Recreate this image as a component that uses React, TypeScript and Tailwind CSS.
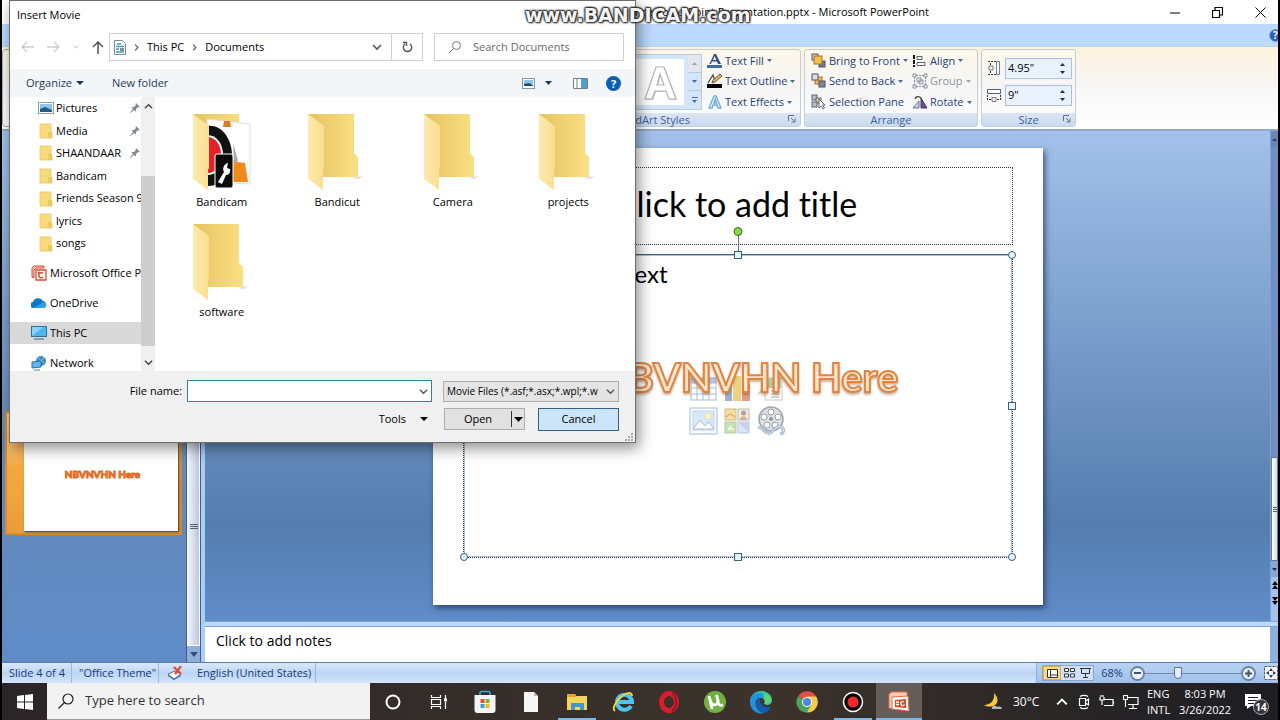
import type { ReactNode } from 'react';

const ui = 'font-["Open_Sans","Noto_Sans",sans-serif]';

function Caret({ className = 'text-[#4a6a9a]' }: { className?: string }) {
  return (
    <svg className={`shrink-0 ${className}`} width="5" height="3" viewBox="0 0 5 3">
      <path d="M0 0h5L2.5 3z" fill="currentColor" />
    </svg>
  );
}

function Chevron({ size = 9, className = 'text-[#555]', d = 'M1 3l4 4 4-4' }: { size?: number; className?: string; d?: string }) {
  return (
    <svg className={`shrink-0 ${className}`} width={size} height={size} viewBox="0 0 10 10" fill="none" stroke="currentColor" strokeWidth="1.6">
      <path d={d} />
    </svg>
  );
}

/* ---------- Ribbon ---------- */

function Launcher() {
  return (
    <svg width="8" height="8" viewBox="0 0 8 8" fill="none" stroke="#5b7390">
      <path d="M.5 6V.5H6M3 3l3.500 3.500M7 3.500V7H3.500" />
    </svg>
  );
}

function LetterIcon({ fill, bar }: { fill: string; bar?: string }) {
  return (
    <svg width="16" height="16" viewBox="0 0 16 16">
      <path d="M2 11h2l1-2.500h5l1 2.500h3L9 1H7L3 10zM6 7l1.700-4L9.300 7z" fill={fill} />
      {bar && <rect x="0" y="12" width="15" height="3" fill={bar} />}
    </svg>
  );
}

const outlineIcon = (
  <svg width="16" height="16" viewBox="0 0 16 16">
    <path d="M1 10L6 2l2 6" fill="none" stroke="#444" strokeWidth="1.200" />
    <path d="M5 10l1-3 7-6 2 2-7 6z" fill="#d9ad6c" stroke="#5e3b1c" strokeWidth=".8" />
    <rect x="0" y="11" width="15" height="4" fill="#000" />
  </svg>
);

const effectsIcon = (
  <svg width="16" height="16" viewBox="0 0 16 16">
    <path d="M2 14L7 2h2l5 12h-3l-1-3H6l-1 3zM7 9h2.500L8.200 5z" fill="#e8f5ff" stroke="#6fb0e0" strokeWidth="1.400" />
  </svg>
);

const frontIcon = (
  <svg width="16" height="16" viewBox="0 0 16 16" stroke="#4c5666">
    <rect x="1" y="1" width="6" height="6" fill="#cfd6df" />
    <rect x="8" y="8" width="6" height="6" fill="#6f7b8c" />
    <rect x="3" y="3" width="8" height="8" fill="#f5bd4b" stroke="#a8752a" />
  </svg>
);

const backIcon = (
  <svg width="16" height="16" viewBox="0 0 16 16" stroke="#4c5666">
    <rect x="4" y="4" width="7" height="7" fill="#f5bd4b" stroke="#a8752a" />
    <rect x="1" y="1" width="6" height="6" fill="#dbe0e7" />
    <rect x="8" y="8" width="6" height="6" fill="#7b8796" />
  </svg>
);

const paneIcon = (
  <svg width="16" height="16" viewBox="0 0 16 16" stroke="#5c6675">
    <rect x="1" y="1" width="5" height="5" fill="#b5bdc8" />
    <rect x="5" y="4" width="5" height="5" fill="#f2cf7a" />
    <rect x="1" y="8" width="5" height="5" fill="#b5bdc8" />
    <path d="M8 5v9l2-2 2 3 1.500-1-2-3h2.500z" fill="#fff" />
  </svg>
);

const alignIcon = (
  <svg width="16" height="16" viewBox="0 0 16 16" fill="none">
    <path d="M2 2v12" stroke="#111" strokeWidth="2" strokeDasharray="4 1" />
    <path d="M5 3.500h5v3H5zM5 9.500h8v3H5z" stroke="#555f6e" fill="#fff" />
  </svg>
);

const groupIcon = (
  <svg width="16" height="16" viewBox="0 0 16 16" fill="none" stroke="#8a93a0">
    <path d="M4 2.500h8M4 13.500h8M2.500 4v8M13.500 4v8" strokeDasharray="2 1" />
    <path d="M1 1h3v3H1zM12 1h3v3h-3zM1 12h3v3H1zM12 12h3v3h-3zM5 5h4v4H5zM7 7h4v4H7z" />
  </svg>
);

const rotateIcon = (
  <svg width="16" height="16" viewBox="0 0 16 16">
    <path d="M7 7v7H1z" fill="#cdd3dc" stroke="#6b7584" />
    <path d="M9 4v10h6z" fill="#6a4b98" stroke="#48307a" />
    <path d="M3 5c1-3 4-3 6-1" fill="none" stroke="#333" strokeWidth="1.300" />
  </svg>
);

interface RibbonCommand {
  label: string;
  icon: ReactNode;
  menu?: boolean;
  disabled?: boolean;
}

const textCommands: RibbonCommand[] = [
  { label: 'Text Fill', icon: <LetterIcon fill="#2c4f86" bar="#3d6cab" />, menu: true },
  { label: 'Text Outline', icon: outlineIcon, menu: true },
  { label: 'Text Effects', icon: effectsIcon, menu: true },
];

const orderCommands: RibbonCommand[] = [
  { label: 'Bring to Front', icon: frontIcon, menu: true },
  { label: 'Send to Back', icon: backIcon, menu: true },
  { label: 'Selection Pane', icon: paneIcon },
];

const alignCommands: RibbonCommand[] = [
  { label: 'Align', icon: alignIcon, menu: true },
  { label: 'Group', icon: groupIcon, menu: true, disabled: true },
  { label: 'Rotate', icon: rotateIcon, menu: true },
];

function CommandColumn({ commands }: { commands: RibbonCommand[] }) {
  return (
    <div className="grid h-[62px] grid-rows-3">
      {commands.map(({ label, icon, menu, disabled }) => (
        <button
          key={label}
          disabled={disabled}
          className="flex items-center gap-[2px] whitespace-nowrap text-[#1f3f77] disabled:text-[#8f949c]"
        >
          {icon}
          <span>{label}</span>
          {menu && <Caret className={disabled ? 'ml-px text-[#a0a5ad]' : 'ml-px text-[#4a6a9a]'} />}
        </button>
      ))}
    </div>
  );
}

function RibbonGroup({ title, className, launcher, children }: { title: string; className: string; launcher?: boolean; children: ReactNode }) {
  return (
    <section className={`flex shrink-0 flex-col rounded-[3px] border border-[#c4cdd8] bg-gradient-to-b from-[#fdf8ea] via-[#f5f5f6] to-white ${className}`}>
      <div className="flex min-h-0 flex-1 items-center">{children}</div>
      <div className="relative flex h-[13px] items-center justify-center bg-gradient-to-b from-[#dce6f4] to-[#c9daef] text-[#3e5f9b]">
        {title}
        {launcher && (
          <button aria-label={`${title} options`} className="absolute right-1 top-[2px]">
            <Launcher />
          </button>
        )}
      </div>
    </section>
  );
}

function SizeField({ label, value, icon }: { label: string; value: string; icon: ReactNode }) {
  return (
    <label className="flex items-center gap-1" aria-label={label}>
      {icon}
      <span className="flex h-[21px] w-[67px] items-center border border-[#a9c1de] bg-[#e9f2fc] pr-[6px]">
        <input type="text" defaultValue={value} className="w-0 flex-1 bg-transparent pl-[2px] text-black outline-none" />
        <span className="flex flex-col gap-[5px] text-[#1d2a55]">
          <svg width="5" height="3" viewBox="0 0 5 3"><path d="M0 3h5L2.500 0z" fill="currentColor" /></svg>
          <Caret className="text-[#1d2a55]" />
        </span>
      </span>
    </label>
  );
}

const heightIcon = (
  <svg width="14" height="16" viewBox="0 0 14 16" fill="none" stroke="#333">
    <path d="M1 1.500h8M1 14.500h8M3.500 3v2M3.500 11v2" strokeDasharray="2 1" />
    <path d="M2 6h4v4H2z" stroke="#777" />
    <path d="M9.500 1.500h3v13h-3z" stroke="#6a7fa5" fill="#fff" />
  </svg>
);

const widthIcon = (
  <svg width="14" height="16" viewBox="0 0 14 16" fill="none" stroke="#333">
    <path d="M.5 2.500h13v4H.500z" stroke="#555f70" fill="#fff" />
    <path d="M.5 8v5M13.500 8v5M2 12.500h2M10 12.500h2" strokeDasharray="2 1" />
    <path d="M5 10.500h4v4H5z" stroke="#777" />
  </svg>
);

function Ribbon() {
  return (
    <div className="flex h-[85px] shrink-0 justify-start gap-[3px] border-b-2 border-[#8fa8c8] border-t border-t-[#c3cfdc] bg-gradient-to-b from-[#fdf3dc] via-[#f7f7f7] to-white pb-[2px] pt-[2px] text-[11px] leading-4">
      <div className="w-[498px] shrink-0 rounded border border-[#9fa9b5]" />
      <RibbonGroup title="WordArt Styles" launcher className="w-[298px]">
        <div className="ml-auto flex h-[56px] border border-[#b7cbe4] bg-[#d3e5f8]">
          <div className="my-1 mr-1 flex w-[48px] items-center justify-center bg-white">
            <svg width="36" height="42" viewBox="0 0 36 42">
              <path d="M3 38L14 6h8l12 32h-7l-3-8H13l-3 8zM15 24h7l-4-11z" fill="#c4c4c4" transform="translate(1 1)" />
              <path d="M3 38L14 6h8l12 32h-7l-3-8H13l-3 8zM15 24h7l-4-11z" fill="#fff" stroke="#b5b5b5" strokeWidth="1.200" />
            </svg>
          </div>
          <div className="grid w-[13px] grid-rows-3 divide-y divide-[#b7cbe4]">
            <button aria-label="Previous styles" className="grid place-items-center bg-[#e3e7ec]">
              <svg width="5" height="3" viewBox="0 0 5 3"><path d="M0 3h5L2.500 0z" fill="#9aa4b0" /></svg>
            </button>
            <button aria-label="Next styles" className="grid place-items-center"><Caret /></button>
            <button aria-label="More styles" className="flex flex-col items-center justify-center gap-[2px]">
              <span className="h-px w-[6px] bg-[#4a6a9a]" />
              <Caret />
            </button>
          </div>
        </div>
        <div className="w-[98px] pl-[5px]"><CommandColumn commands={textCommands} /></div>
      </RibbonGroup>
      <RibbonGroup title="Arrange" className="w-[174px]">
        <div className="flex gap-1 pl-[6px]">
          <div className="w-[97px]"><CommandColumn commands={orderCommands} /></div>
          <CommandColumn commands={alignCommands} />
        </div>
      </RibbonGroup>
      <RibbonGroup title="Size" launcher className="w-[95px]">
        <div className="flex flex-col gap-[6px] pl-[5px]">
          <SizeField label="Shape height" value={'4.95"'} icon={heightIcon} />
          <SizeField label="Shape width" value={'9"'} icon={widthIcon} />
        </div>
      </RibbonGroup>
    </div>
  );
}

/* ---------- Slide ---------- */

const handles = [
  'left-0 top-0 rounded-full',
  'left-1/2 top-0',
  'left-full top-0 rounded-full',
  'left-0 top-1/2',
  'left-full top-1/2',
  'left-0 top-full rounded-full',
  'left-1/2 top-full',
  'left-full top-full rounded-full',
];

function ContentIcons() {
  return (
    <svg width="98" height="66" viewBox="0 0 98 66" opacity=".6">
      <g stroke="#6f8fbd" fill="#fff">
        <rect x="2" y="8" width="25" height="22" />
        <rect x="2" y="8" width="25" height="5" fill="#7ea1d6" />
        <path d="M2 18h25M2 24h25M8 13v17M14 13v17M20 13v17" />
      </g>
      <path d="M36 16h7v15h-7z" fill="#5a7fb8" />
      <path d="M44 6h8v25h-8z" fill="#e4b52e" />
      <path d="M53 14h8v17h-8z" fill="#cf5a3c" />
      <path d="M76 8h17v22H76z" fill="#fff" stroke="#9aa" />
      <path d="M68 25L80 8h12v10H80z" fill="#7fb870" />
      <path d="M82 21h8M82 24h8M82 27h8" stroke="#666" />
      <g>
        <rect x="1" y="38" width="27" height="26" fill="#f5faff" stroke="#6f93a8" />
        <rect x="4" y="41" width="21" height="19" fill="#b9dcf8" stroke="#9bbbd6" />
        <circle cx="19" cy="46" r="3" fill="#fff0b0" stroke="#e9c46a" />
        <path d="M4 59l7-9 5 6 4-4 5 7z" fill="#fff" stroke="#6d93c4" />
      </g>
      <g strokeWidth="1">
        <rect x="36" y="39" width="11" height="11" fill="#f3c957" stroke="#b08c50" />
        <path d="M37 47l4-3 5 3" stroke="#a35a35" fill="none" />
        <rect x="49" y="39" width="11" height="11" fill="#e8ddd3" stroke="#8d8d8d" />
        <circle cx="54.500" cy="43" r="2.500" fill="#8e6046" />
        <path d="M51 50c0-5 7-5 7 0z" fill="#c98044" />
        <rect x="36" y="52" width="11" height="11" fill="#a5d086" stroke="#79a566" />
        <path d="M38 60l3-5 4 5z" fill="#e3f4d8" />
        <rect x="49" y="52" width="11" height="11" fill="#c5d6f5" stroke="#8a9fce" />
        <path d="M49 52l11 11V52z" fill="#a5b7ee" />
      </g>
      <g stroke="#59656f">
        <circle cx="82" cy="49" r="12" fill="#c5cbd1" strokeWidth="1.500" />
        <g fill="#fff">
          <circle cx="82" cy="42" r="3" /><circle cx="75" cy="47" r="3" /><circle cx="89" cy="47" r="3" />
          <circle cx="78" cy="55" r="3" /><circle cx="86" cy="55" r="3" />
        </g>
        <circle cx="82" cy="49" r="1.500" fill="#444" />
        <path d="M69 58c5-3 7 8 12 5s7-8 11-6c4 2 3 6-1 7" fill="none" stroke="#5f86ab" strokeWidth="3" />
        <path d="M69 58c5-3 7 8 12 5s7-8 11-6c4 2 3 6-1 7" fill="none" stroke="#d6e5f2" />
      </g>
    </svg>
  );
}

function Slide() {
  return (
    <div className="relative flex h-[457px] w-[610px] shrink-0 flex-col gap-[9px] bg-white px-[30px] pt-[19px] font-[Lato,Carlito,sans-serif] text-black shadow-[2px_3px_6px_rgba(20,40,80,0.7)] [font-variant-ligatures:none]">
      <div className="flex h-[78px] items-center justify-center border border-dotted border-[#333] pb-1 pr-1 text-[34px]">
        Click to add title
      </div>
      <div className="relative h-[304px] border border-dotted border-[#1f3347] shadow-[inset_0_0_0_1px_#a9c2d6] [border-top-style:solid] [border-top-color:#44647f]">
        <ul className="list-disc pl-[32px] pt-[4px] text-[24px] leading-[30px]"><li>Click to add text</li></ul>
        <div className="absolute inset-x-0 top-[115px] flex justify-center"><ContentIcons /></div>
        <span className="absolute -top-[20px] left-1/2 h-[20px] w-px bg-[#5a7186]" />
        <span className="absolute -top-[28px] left-1/2 size-[9px] -translate-x-1/2 rounded-full border border-[#3f6b22] bg-[#86d83c]" />
        {handles.map((place) => (
          <span key={place} className={`absolute size-2 -translate-x-1/2 -translate-y-1/2 border border-[#3d6076] bg-[#e2f3fa] ${place}`} />
        ))}
      </div>
      <div className="absolute inset-x-0 top-[204px] whitespace-nowrap pl-5 text-center text-[40px] font-bold leading-[50px] text-[#fee6cd] drop-shadow-[0_2px_1px_rgba(120,60,20,0.4)] [-webkit-text-stroke:2px_#e2833f]">
        NBVNVHN Here
      </div>
    </div>
  );
}

function SlidePane() {
  return (
    <aside className="flex w-[199px] shrink-0">
      <div className="flex flex-1 flex-col justify-end bg-gradient-to-b from-[#a3c1ea] via-[#6488b8] via-60% to-[#5f8cc8] pb-[127px] pl-[3px] pr-1">
        <div className="flex h-[124px] justify-end border-2 border-[#d58a35] bg-gradient-to-b from-[#f6d29a] via-[#f3a93f] via-45% to-[#eb9d38] pb-[2px] pr-[2px] pt-1">
          <div className="flex w-[154px] items-center justify-center bg-white pl-[3px] font-[Lato,Carlito,sans-serif] text-[10px] font-bold text-[#f9a86a] shadow-[1px_1px_2px_#333] [-webkit-text-stroke:1px_#e5661c]">
            NBVNVHN Here
          </div>
        </div>
      </div>
      <div className="flex w-[15px] flex-col border-x border-[#3f5f8f] bg-[#7c9cc6]">
        <div className="grid flex-1 place-items-center border border-white bg-gradient-to-r from-[#f0f3fa] to-[#bcc6dc]">
          <span className="mt-[276px] flex flex-col gap-px">
            <span className="h-px w-2 bg-[#555f78]" /><span className="h-px w-2 bg-[#555f78]" /><span className="h-px w-2 bg-[#555f78]" />
          </span>
        </div>
        <button aria-label="Scroll slides down" className="grid h-4 place-items-center bg-[#8fafd8]">
          <svg width="8" height="5" viewBox="0 0 8 5"><path d="M0 0h8L4 5z" fill="#334f80" /></svg>
        </button>
      </div>
    </aside>
  );
}

function EdgeScrollbar() {
  return (
    <div className="flex w-2 shrink-0 flex-col overflow-hidden border-l border-[#7fa0d0] bg-[#7090c4]">
      <button aria-label="Scroll up" className="grid h-4 place-items-center bg-[#6786b8]"><Caret className="rotate-180 text-[#2d456e]" /></button>
      <div className="flex-1" />
      <div className="grid h-[104px] place-items-center border border-[#5f7aa6] bg-gradient-to-r from-white to-[#d5dcea]">
        <span className="flex flex-col gap-px">
          <span className="h-px w-1 bg-[#555f78]" /><span className="h-px w-1 bg-[#555f78]" /><span className="h-px w-1 bg-[#555f78]" />
        </span>
      </div>
      <button aria-label="Scroll down" className="grid h-4 place-items-center bg-[#86a6d4]"><Caret className="text-[#1f3358]" /></button>
      <div className="flex h-[44px] flex-col items-center justify-start gap-2 bg-[#a4c2ee] pt-1">
        <button aria-label="Previous slide">
          <svg width="6" height="8" viewBox="0 0 6 8"><path d="M0 4l3-4 3 4zM0 8l3-4 3 4z" /></svg>
        </button>
        <button aria-label="Next slide">
          <svg width="6" height="8" viewBox="0 0 6 8"><path d="M0 0h6L3 4zM0 4h6L3 8z" /></svg>
        </button>
      </div>
    </div>
  );
}

function Workspace() {
  return (
    <div className="flex min-h-0 flex-1 bg-[#a9ccf8]">
      <SlidePane />
      <div className="ml-1 flex min-w-0 flex-1 flex-col">
        <div className="flex min-h-0 flex-1">
          <div className="flex min-w-0 flex-1 items-center justify-center bg-gradient-to-b from-[#a3c1ea] via-[#557dae] via-80% to-[#618cc8]">
            <Slide />
          </div>
          <EdgeScrollbar />
        </div>
        <div className="h-[6px] shrink-0 border-y border-[#7fa3d6] bg-[#bcd8fb]" />
        <div className="flex h-[35px] shrink-0 bg-white">
          <textarea aria-label="Notes" placeholder="Click to add notes" className="flex-1 resize-none pl-[11px] pt-1 text-[14px] leading-5 outline-none placeholder:text-black" />
          <div className="w-2 bg-[#8fb0dc]" />
        </div>
      </div>
    </div>
  );
}

/* ---------- Status bar ---------- */

function StatusBar() {
  return (
    <footer className="flex h-[21px] shrink-0 items-center border-t border-[#5d7ba6] bg-gradient-to-b from-[#dbe9fb] via-[#bcd5f5] to-[#d3e5fb] text-[11px] text-[#1b3a75]">
      <span className="flex h-full w-[70px] items-center border-r border-[#9db9de] pl-[7px]">Slide 4 of 4</span>
      <span className="flex h-full w-[87px] items-center border-r border-[#9db9de] pl-[7px]">"Office Theme"</span>
      <button aria-label="Spelling" className="ml-2">
        <svg width="16" height="14" viewBox="0 0 16 14">
          <path d="M1 8l7-3 6 3-7 5z" fill="#fff" stroke="#5470a0" />
          <path d="M1 9l6 4 7-4v1l-7 4-6-4z" fill="#3b5c9a" />
          <path d="M7 1l7 7M14 0L8 8" stroke="#e04a33" strokeWidth="2.200" />
        </svg>
      </button>
      <span className="flex h-full w-[133px] items-center border-r border-[#9db9de] pl-[14px]">English (United States)</span>
      <div className="ml-auto flex h-full items-center border-l border-[#8fb0dc] bg-gradient-to-b from-[#b9d2f2] to-[#9fc0ea] pl-[5px]">
        <div className="flex h-4 w-[52px] items-center border border-[#86a5cf] bg-[#cfe0f7]">
          <button aria-label="Normal view" className="grid h-full flex-1 place-items-center border border-[#e2a64b] bg-[#fcd98f]">
            <svg width="11" height="9" viewBox="0 0 11 9" fill="#fff" stroke="#333"><path d="M.5.500h10v8H.500zM3.500.500v8M3.500 6h7" /></svg>
          </button>
          <button aria-label="Slide sorter" className="grid h-full flex-1 place-items-center">
            <svg width="11" height="10" viewBox="0 0 11 10" fill="#fff" stroke="#333"><path d="M.5.500h4v3h-4zM6.500.500h4v3h-4zM.5 6h4v3h-4zM6.500 6h4v3h-4z" /></svg>
          </button>
          <button aria-label="Slide show" className="grid h-full flex-1 place-items-center">
            <svg width="11" height="10" viewBox="0 0 11 10" fill="none" stroke="#333"><path d="M0 .500h11M1.500 1v4.500h8V1M5.500 6v3M3 9.500h5" /></svg>
          </button>
        </div>
        <button className="w-[36px] text-center">68%</button>
        <button aria-label="Zoom out" className="grid size-[15px] place-items-center rounded-full border-2 border-[#6b83a8] bg-[#eef3fa]">
          <span className="h-[2px] w-[7px] bg-[#41536f]" />
        </button>
        <input
          type="range"
          aria-label="Zoom"
          min={0}
          max={100}
          defaultValue={33}
          className="h-3 w-[96px] appearance-none bg-[linear-gradient(#7189ad,#7189ad)] bg-[length:100%_1px] bg-center bg-no-repeat [&::-webkit-slider-thumb]:h-3 [&::-webkit-slider-thumb]:w-2 [&::-webkit-slider-thumb]:appearance-none [&::-webkit-slider-thumb]:rounded-b-full [&::-webkit-slider-thumb]:border [&::-webkit-slider-thumb]:border-[#5f7597] [&::-webkit-slider-thumb]:bg-[#e6edf8]"
        />
        <button aria-label="Zoom in" className="grid size-[15px] place-items-center rounded-full border-2 border-[#6b83a8] bg-[#eef3fa]">
          <svg width="9" height="9" viewBox="0 0 9 9" stroke="#41536f" strokeWidth="2"><path d="M4.500 1v7M1 4.500h7" /></svg>
        </button>
        <button aria-label="Fit slide to window" className="ml-2">
          <svg width="14" height="14" viewBox="0 0 14 14">
            <rect x=".5" y=".5" width="13" height="13" fill="#f4f7fc" stroke="#55637a" strokeDasharray="3 1" />
            <path d="M7 2l2 3H5zM7 12l2-3H5zM2 7l3-2v4zM12 7L9 5v4z" fill="#333f55" />
          </svg>
        </button>
      </div>
    </footer>
  );
}

/* ---------- Taskbar ---------- */

const apps: { name: string; icon: ReactNode; open?: boolean; active?: boolean }[] = [
  {
    name: 'Cortana',
    icon: <svg width="16" height="16" viewBox="0 0 16 16"><circle cx="8" cy="8" r="6.500" fill="none" stroke="#fff" strokeWidth="2" /></svg>,
  },
  {
    name: 'Task View',
    icon: (
      <svg width="18" height="16" viewBox="0 0 18 16" fill="none" stroke="#fff">
        <path d="M1.500 1v2.500h9V1M1.500 15v-2.500h9V15M1.500 5.500h9v5h-9zM15.500 1v4M15.500 8v7" strokeWidth="1.200" />
        <rect x="14.500" y="5" width="2" height="2" fill="#fff" />
      </svg>
    ),
  },
  {
    name: 'Microsoft Store',
    icon: (
      <svg width="24" height="24" viewBox="0 0 24 24">
        <path d="M7 6V3c0-1 .500-1.500 1.500-1.500h7c1 0 1.500.500 1.500 1.500v3" fill="none" stroke="#38a8dc" strokeWidth="1.600" />
        <path d="M1.500 5h21v15c0 2-1 3-3 3h-15c-2 0-3-1-3-3z" fill="#f4f4f4" />
        <path d="M7.500 9h4v4h-4z" fill="#e24f2d" /><path d="M12.500 9h4v4h-4z" fill="#7cb82f" />
        <path d="M7.500 14h4v4h-4z" fill="#2ba3dd" /><path d="M12.500 14h4v4h-4z" fill="#f5b71c" />
      </svg>
    ),
  },
  {
    name: 'Document',
    icon: <svg width="16" height="20" viewBox="0 0 16 20"><path d="M1 0h10l4 4v16H1z" fill="#f6f6f6" /><path d="M11 0v4h4z" fill="#b5b5b5" /></svg>,
  },
  {
    name: 'File Explorer',
    open: true,
    icon: (
      <svg width="22" height="20" viewBox="0 0 22 20">
        <path d="M1 2h8l1 2h11v14H1z" fill="#f9d45c" /><path d="M1 2h8l1 3H1z" fill="#e3a52c" />
        <path d="M5 18v-7h13v7h-4v-3H9v3z" fill="#3f97cf" />
      </svg>
    ),
  },
  {
    name: 'Internet Explorer',
    icon: (
      <svg width="22" height="22" viewBox="0 0 22 22" fill="none">
        <path d="M19 15a7.500 7.500 0 1 1 1-4H7" stroke="#4cc3f0" strokeWidth="4" />
        <path d="M3 20c-3-2 0-9 6-14s11-5 11-1" stroke="#f0cf3a" strokeWidth="2" />
      </svg>
    ),
  },
  {
    name: 'Opera',
    icon: <svg width="22" height="22" viewBox="0 0 22 22"><ellipse cx="11" cy="11" rx="7.500" ry="8.500" fill="none" stroke="#d81e2c" strokeWidth="5" /><path d="M14 2c5 2 6 14 0 18" fill="none" stroke="#9e1420" strokeWidth="2" /></svg>,
  },
  {
    name: 'uTorrent',
    icon: (
      <svg width="24" height="24" viewBox="0 0 24 24" fill="none">
        <circle cx="12" cy="12" r="11" fill="#72b043" />
        <path d="M6 6l3 13M7 9c1 7 7 8 8 2L13.500 5M15 10c0 4 1 6 5 5" stroke="#fff" strokeWidth="2.800" />
      </svg>
    ),
  },
  {
    name: 'Microsoft Edge',
    icon: (
      <svg width="24" height="24" viewBox="0 0 24 24">
        <path d="M1 12C1 5 6 1 12 1c7 0 11 5 11 9 0 5-5 6-8 4 2-3-1-7-5-6-4 0-8 2-9 4z" fill="#38bfae" />
        <path d="M1 12c0-6 4-9 9-9 4 0 6 2 6 5-6-2-11 2-9 8 1 3 4 6 8 7C7 25 1 19 1 12z" fill="#2193df" />
        <path d="M7 14c0-3 2-5 4-6-1 5 2 10 11 9-2 4-5 6-8 6-4-1-7-4-7-9z" fill="#155cad" />
        <path d="M16 4c4 1 7 4 6 7-1 2-4 3-7 3 2-3 2-6-1-8z" fill="#63d66b" />
      </svg>
    ),
  },
  {
    name: 'Chrome',
    icon: (
      <svg width="22" height="22" viewBox="0 0 22 22">
        <path d="M11 11L2 5.500a10.500 10.500 0 0 1 18.200 0z" fill="#df5145" />
        <path d="M11 11V5.500h9.200A10.500 10.500 0 0 1 11 21.500z" fill="#f7cb45" />
        <path d="M11 11l4 3-4 7.500A10.500 10.500 0 0 1 2 5.500z" fill="#4aa35a" />
        <circle cx="11" cy="11" r="5" fill="#fff" /><circle cx="11" cy="11" r="4" fill="#4b86e8" />
      </svg>
    ),
  },
  {
    name: 'Bandicam',
    open: true,
    icon: <svg width="22" height="22" viewBox="0 0 22 22"><circle cx="11" cy="11" r="9.500" fill="#000" stroke="#fff" strokeWidth="1.500" /><circle cx="11" cy="11" r="5.500" fill="#f5262c" /></svg>,
  },
  {
    name: 'PowerPoint',
    open: true,
    active: true,
    icon: (
      <svg width="22" height="22" viewBox="0 0 22 22">
        <path d="M1 3l3-2h15v5H6L4 18l-3-1z" fill="#fbc9b5" stroke="#e0714f" />
        <path d="M4 6l16-1 1 15-17-2z" fill="#fff" stroke="#e0714f" />
        <path d="M7 9l11-1v9l-11-1z" fill="#cf4d22" />
        <path d="M8 11h3M8 13.500h3M16 11a2 2 0 1 0 .500 2.500" stroke="#fff" strokeWidth="1.300" fill="none" />
      </svg>
    ),
  },
];

function Taskbar() {
  return (
    <div className="flex h-[37px] shrink-0 items-stretch bg-gradient-to-r from-[#2b2528] via-[#3c332b] via-60% to-[#1d1d23] text-white">
      <button aria-label="Start" className="grid w-[45px] place-items-center">
        <svg width="16" height="16" viewBox="0 0 16 16" fill="#fff"><path d="M0 2l7-1v6.500H0zM8 1l8-1v7.500H8zM0 8.500h7V15l-7-1zM8 8.500h8V16l-8-1z" /></svg>
      </button>
      <label className="flex w-[323px] items-center gap-[11px] border-b border-[#999] bg-[#f2f2f2] pl-[11px]">
        <svg width="16" height="16" viewBox="0 0 16 16" fill="none" stroke="#222" strokeWidth="1.200"><circle cx="10" cy="6" r="5" /><path d="M6.500 9.500L.5 15.500" /></svg>
        <input aria-label="Search" placeholder="Type here to search" className="min-w-0 flex-1 bg-transparent text-[13px] outline-none placeholder:text-[#333]" />
      </label>
      {apps.map(({ name, icon, open, active }) => (
        <button key={name} aria-label={name} className={`relative grid w-[46px] shrink-0 place-items-center ${active ? 'bg-[#655d57]' : ''}`}>
          {icon}
          {open && <span className={`absolute bottom-0 h-[2px] bg-[#7db8ea] ${active ? 'inset-x-0' : 'inset-x-1'}`} />}
        </button>
      ))}
      <div className="ml-auto flex items-center text-[11px] leading-4">
        <svg width="20" height="18" viewBox="0 0 20 18">
          <path d="M11 0c4 4 5 9 1 12-3 2-8 2-11 0 7 0 11-5 10-12z" fill="#f8c93c" />
          <path d="M9 16c-1-4 4-4 5-2 3-1 5 0 5 2z" fill="#d8d8d8" opacity=".8" />
        </svg>
        <span className="ml-[10px] w-[34px] text-[12px]">30°C</span>
        <button aria-label="Show hidden icons" className="grid w-[30px] place-items-center"><Chevron size={12} className="text-white" d="M1 7l4-4 4 4" /></button>
        <svg width="14" height="16" viewBox="0 0 14 16" fill="none" stroke="#fff"><path d="M3 2.500c2-1.500 6-1.500 8 0M3 13.500c2 1.500 6 1.500 8 0M2.500 4.500h6v7h-6zM8.500 7l3-2v6l-3-2" strokeWidth="1.200" /></svg>
        <svg className="ml-2" width="16" height="14" viewBox="0 0 16 14" fill="none" stroke="#fff"><path d="M5 4.500h9v6H5M14.500 6.500v2M1 2v3h4V2M3 5v5M2 0v2M4 0v2" strokeWidth="1.200" /></svg>
        <svg className="ml-2" width="16" height="14" viewBox="0 0 16 14" fill="none" stroke="#fff"><path d="M4 2.500h11v7H5M10 10v3M6 13.500h8M.5.500h4v4h-4zM2.500 5v7" strokeWidth="1.200" /></svg>
        <button className="ml-2 flex w-[23px] flex-col items-start"><span>ENG</span><span>INTL</span></button>
        <button className="ml-[9px] flex w-[52px] flex-col items-center whitespace-nowrap"><span>8:03 PM</span><span>3/26/2022</span></button>
        <button aria-label="14 notifications" className="relative ml-[14px] mr-[9px] h-[24px] w-[24px]">
          <svg width="16" height="16" viewBox="0 0 16 16" fill="#fff"><path d="M0 0h16v12H6l-4 3v-3H0zM3 3v1h10V3zM3 6v1h10V6zM3 9v1h6V9z" fillRule="evenodd" /></svg>
          <span className="absolute -bottom-px right-0 grid size-4 place-items-center rounded-full border border-[#aaa] bg-[#33333a] text-[10px] font-bold leading-none">14</span>
        </button>
      </div>
    </div>
  );
}

/* ---------- Insert Movie dialog ---------- */

function SmallFolder() {
  return (
    <svg width="16" height="16" viewBox="0 0 16 16">
      <path d="M2 1h11v8l1 1v5H2z" fill="#f8dc7c" stroke="#e6c45c" strokeWidth=".8" />
      <path d="M10 9h3l1 1v5h-4z" fill="#ecc95d" />
    </svg>
  );
}

function Pin() {
  return (
    <svg className="ml-auto mr-[3px] shrink-0" width="10" height="10" viewBox="0 0 10 10">
      <path d="M6 0l4 4-1 .500-1-.500-2 2v2.500L4 7 .500 10 0 9.500 3 6 1.500 4H4l2-2-.500-1z" fill="#7f8990" />
    </svg>
  );
}

const pictureIcon = (
  <svg width="16" height="14" viewBox="0 0 16 14">
    <rect x=".5" y="1.500" width="15" height="11" fill="#fff" stroke="#8aa0b4" />
    <rect x="2" y="3" width="12" height="8" fill="#8fc5ea" /><path d="M2 8l5-2 7 3v2H2z" fill="#245b80" />
  </svg>
);

const quickAccess = [
  { name: 'Pictures', icon: pictureIcon, pinned: true },
  { name: 'Media', icon: <SmallFolder />, pinned: true },
  { name: 'SHAANDAAR', icon: <SmallFolder />, pinned: true },
  { name: 'Bandicam', icon: <SmallFolder /> },
  { name: 'Friends Season 9', icon: <SmallFolder /> },
  { name: 'lyrics', icon: <SmallFolder /> },
  { name: 'songs', icon: <SmallFolder /> },
];

const places = [
  {
    name: 'Microsoft Office P',
    icon: (
      <svg width="16" height="16" viewBox="0 0 16 16" fill="none" stroke="#d04e32">
        <path d="M1 12V3l2-2h10v2H5L3 5v8z" fill="#f6c4b4" /><path d="M5 5h10v10H5z" fill="#fff" strokeWidth="1.300" />
        <path d="M12 8.500a2.500 2.500 0 1 0 0 3.500M7 7.500h2" strokeWidth="1.600" />
      </svg>
    ),
  },
  {
    name: 'OneDrive',
    icon: (
      <svg width="16" height="12" viewBox="0 0 16 12">
        <path d="M3 11a3 3 0 0 1-1-6 5.500 5.500 0 0 1 10-1 3.700 3.700 0 0 1 1 7z" fill="#0f78c8" /><path d="M3 11l8-5a4 4 0 0 1 4 1 3 3 0 0 1-2 4z" fill="#2ba3ec" />
      </svg>
    ),
  },
  {
    name: 'This PC',
    selected: true,
    icon: (
      <svg width="16" height="14" viewBox="0 0 16 14">
        <rect x=".5" y=".5" width="15" height="10" fill="#4fb5ee" stroke="#2e6f9c" /><path d="M1 10L12 1H1z" fill="#8ad3f8" />
        <path d="M3 13h10" stroke="#6690ab" strokeWidth="1.500" />
      </svg>
    ),
  },
  {
    name: 'Network',
    icon: (
      <svg width="16" height="16" viewBox="0 0 16 16">
        <circle cx="10" cy="6" r="5" fill="#3a8bc2" /><path d="M7 3l6 5M13 2L8 9" stroke="#8cc8ea" />
        <path d="M1 7l9-1v6l-9 1z" fill="#58baf0" stroke="#2e6f9c" /><path d="M3 15h6" stroke="#557f9c" />
      </svg>
    ),
  },
];

function BigFolder({ children }: { children?: ReactNode }) {
  return (
    <svg width="60" height="78" viewBox="0 0 60 78">
      <defs>
        <linearGradient id="folderBack"><stop offset="0" stopColor="#e6c25e" /><stop offset="1" stopColor="#fae084" /></linearGradient>
        <linearGradient id="folderFlap"><stop offset="0" stopColor="#fdeaad" /><stop offset="1" stopColor="#f8de8f" /></linearGradient>
      </defs>
      <path d="M45 65l11-2-4 3z" fill="#ddd" />
      <path d="M1 1h46v39l4 4v20H1z" fill="url(#folderBack)" />
      {children}
      <path d="M1 1l16 12v42l-1 2v20L1 66z" fill="url(#folderFlap)" />
    </svg>
  );
}

const discPreview = (
  <>
    <path d="M15 6l43 5v60l-43-2z" fill="#fff" stroke="#ddd" />
    <path d="M32 8h6l1 6h-8z" fill="#d8792c" />
    <path d="M15 13c14-2 25 12 25 30S30 73 16 73z" fill="#111" />
    <path d="M15 22c10 0 16 9 16 20s-6 20-15 20z" fill="#fff" />
    <path d="M15 24c9 0 14 8 14 18s-5 18-13 18z" fill="#e6202a" />
    <path d="M41 46l4 3 8 1 3 19H41z" fill="#f08a1c" /><path d="M41 30l5 18-4 2z" fill="#aaa" />
    <rect x="23" y="41" width="18" height="34" rx="2" fill="#0a0a0a" stroke="#fff" />
    <path d="M26 69l6-10c-2-4 0-8 4-9l-1 5 3 1c1 4-2 6-4 6l-4 9z" fill="#fff" />
  </>
);

const folders = ['Bandicam', 'Bandicut', 'Camera', 'projects', 'software'];

function MovieDialog() {
  return (
    <div role="dialog" aria-label="Insert Movie" className="absolute left-[7px] top-0 flex h-[443px] w-[627px] flex-col border border-[#6d6d6d] bg-white text-[11px] text-black shadow-[3px_5px_14px_rgba(0,0,0,0.45)]">
      <h2 className="flex h-[28px] shrink-0 items-center pl-[7px]">Insert Movie</h2>

      <div className="mt-1 flex h-[28px] shrink-0 items-center pr-[11px]">
        <div className="flex w-[99px] items-center gap-[13px] pl-[11px]">
          <button aria-label="Back">
            <svg width="13" height="12" viewBox="0 0 13 12" fill="none" stroke="#ccc" strokeWidth="1.300"><path d="M13 6H1M6 1L1 6l5 5" /></svg>
          </button>
          <button aria-label="Forward">
            <svg width="13" height="12" viewBox="0 0 13 12" fill="none" stroke="#ccc" strokeWidth="1.300"><path d="M0 6h12M7 1l5 5-5 5" /></svg>
          </button>
          <button aria-label="Recent locations"><Chevron size={6} className="text-[#bbb]" /></button>
          <button aria-label="Up">
            <svg width="12" height="13" viewBox="0 0 12 13" fill="none" stroke="#555" strokeWidth="1.500"><path d="M6 13V1M1 6l5-5 5 5" /></svg>
          </button>
        </div>
        <div className="flex h-full w-[314px] items-center border border-[#d0d0d0]">
          <svg className="ml-1" width="12" height="15" viewBox="0 0 12 15">
            <path d="M.5.500h8l3 3v11H.500z" fill="#fff" stroke="#7b8c99" /><path d="M3 4h4M2 6.500h8M2 9h3M2 12h8" stroke="#3aa0bd" strokeWidth="1.300" /><path d="M6 8h4v3H6z" fill="#83909a" />
          </svg>
          <Chevron size={7} className="ml-[7px] text-[#555]" d="M3 1l4 4-4 4" />
          <button className="ml-[7px]">This PC</button>
          <Chevron size={7} className="ml-[7px] text-[#555]" d="M3 1l4 4-4 4" />
          <button className="ml-[7px]">Documents</button>
          <button aria-label="Previous locations" className="ml-auto mr-[9px]"><Chevron size={10} /></button>
          <button aria-label="Refresh" className="grid h-full w-[31px] place-items-center border-l border-[#d0d0d0]">
            <svg width="11" height="12" viewBox="0 0 11 12" fill="none" stroke="#555" strokeWidth="1.400"><path d="M8 3a4.200 4.200 0 1 1-5 0M1 1.500h3.500V5" /></svg>
          </button>
        </div>
        <label className="ml-[11px] flex h-full flex-1 items-center gap-[12px] border border-[#d0d0d0] pl-[14px]">
          <svg width="12" height="12" viewBox="0 0 12 12" fill="none" stroke="#777"><circle cx="7.500" cy="4.500" r="4" /><path d="M4.500 7.500L0 12" /></svg>
          <input aria-label="Search" placeholder="Search Documents" className="min-w-0 flex-1 outline-none placeholder:text-[#6a6a6a]" />
        </label>
      </div>

      <div className="mt-2 flex h-[28px] shrink-0 items-center bg-[#f3f6f8] pl-4 pr-[14px] text-[#1e395b]">
        <button className="flex items-center gap-[4px]">
          Organize
          <svg width="8" height="4" viewBox="0 0 8 4"><path d="M0 0h8L4 4z" fill="#1e395b" /></svg>
        </button>
        <button className="ml-[28px]">New folder</button>
        <button aria-label="Change view" className="ml-auto flex items-center gap-[10px]">
          <svg width="13" height="11" viewBox="0 0 13 11"><rect x=".5" y=".5" width="12" height="10" fill="#fff" stroke="#7f98ac" /><path d="M2 2h9v4H2z" fill="#8fc5ea" /><path d="M2 6l5-1 4 2v1H2z" fill="#1c4f74" /></svg>
          <svg width="7" height="4" viewBox="0 0 7 4"><path d="M0 0h7L3.500 4z" fill="#1e395b" /></svg>
        </button>
        <button aria-label="Preview pane" className="ml-[21px]">
          <svg width="15" height="11" viewBox="0 0 15 11"><path d="M.5.500h14v10H.500zM4 1v10" fill="#fff" stroke="#6f8191" /><rect x="8" y="1" width="6" height="9" fill="#4a9fdc" /></svg>
        </button>
        <button aria-label="Help" className="ml-[18px] grid size-[15px] place-items-center rounded-full bg-[#0a5fb4] font-bold leading-none text-white">?</button>
      </div>

      <div className="flex min-h-0 flex-1 overflow-hidden">
        <nav className="w-[131px] shrink-0">
          <ul className="grid h-[158px] grid-rows-7">
            {quickAccess.map(({ name, icon, pinned }) => (
              <li key={name} className="flex items-center gap-[2px] pl-[28px]">
                <span className="shrink-0">{icon}</span>
                <span className="whitespace-nowrap">{name}</span>
                {pinned && <Pin />}
              </li>
            ))}
          </ul>
          <ul className="mt-[7px] flex flex-col gap-2">
            {places.map(({ name, icon, selected }) => (
              <li key={name} className={`flex h-[22px] items-center gap-[3px] pl-[21px] ${selected ? 'bg-[#d9d9d9]' : ''}`}>
                <span className="shrink-0">{icon}</span>
                <span className="whitespace-nowrap">{name}</span>
              </li>
            ))}
          </ul>
        </nav>
        <div className="flex w-[14px] shrink-0 flex-col items-center bg-[#f0f0f0]">
          <button aria-label="Scroll up" className="h-[18px]"><Chevron className="text-[#444]" d="M1 7l4-4 4 4" /></button>
          <div className="mt-[61px] w-full flex-1 bg-[#cdcdcd]" />
          <button aria-label="Scroll down" className="grid h-[25px] place-items-center pt-2"><Chevron className="text-[#444]" /></button>
        </div>
        <ul className="grid flex-1 auto-rows-[110px] grid-cols-4 pl-[9px] pr-[9px] pt-4">
          {folders.map((name) => (
            <li key={name} className="flex flex-col items-center gap-[3px]">
              <BigFolder>{name === 'Bandicam' && discPreview}</BigFolder>
              {name}
            </li>
          ))}
        </ul>
      </div>

      <div className="relative flex h-[71px] shrink-0 flex-col gap-[6px] bg-[#f0f0f0] pr-4 pt-[9px]">
        <div className="flex h-[22px] items-center justify-end">
          <label htmlFor="file-name">File name:</label>
          <span className="relative ml-[5px]">
            <input id="file-name" className="h-[22px] w-[245px] border border-[#3a7ca8] bg-white px-1 outline-none" />
            <Chevron className="absolute right-1 top-[7px] text-[#555]" />
          </span>
          <span className="relative ml-[11px]">
            <select aria-label="File type" className="h-[21px] w-[176px] appearance-none border border-[#adadad] bg-[#e4e4e4] pl-[3px] pr-[14px] text-[10px]">
              <option>Movie Files (*.asf;*.asx;*.wpl;*.w</option>
            </select>
            <Chevron className="absolute right-1 top-[6px] text-[#555]" />
          </span>
        </div>
        <div className="flex h-[22px] items-center justify-end">
          <button className="flex items-center gap-[14px]">
            Tools
            <svg width="8" height="4" viewBox="0 0 8 4"><path d="M0 0h8L4 4z" /></svg>
          </button>
          <div className="ml-4 flex h-[22px] w-[81px] border border-[#adadad] bg-[#e1e1e1]">
            <button className="flex-1">Open</button>
            <button aria-label="Open options" className="my-[2px] grid w-[13px] place-items-center border-l border-[#333]">
              <svg width="9" height="5" viewBox="0 0 9 5"><path d="M0 0h9L4.500 5z" /></svg>
            </button>
          </div>
          <button className="ml-[13px] h-[23px] w-[81px] border border-[#2c628b] bg-[#cce4f7]">Cancel</button>
        </div>
        <svg className="absolute bottom-px right-[2px]" width="8" height="8" viewBox="0 0 8 8" fill="#aaa">
          <path d="M6 0h2v2H6zM3 3h2v2H3zM6 3h2v2H6zM0 6h2v2H0zM3 6h2v2H3zM6 6h2v2H6z" />
        </svg>
      </div>
    </div>
  );
}

export default function App() {
  return (
    <div className={`relative flex h-screen flex-col overflow-hidden border-x-2 border-black bg-white ${ui}`}>
      <header className="flex h-[24px] shrink-0 items-center justify-end text-[11px] text-black">
        <h1 className="whitespace-nowrap">Microsoft Office PowerPoint Presentation.pptx - Microsoft PowerPoint</h1>
        <div className="ml-[240px] mr-3 flex items-center gap-8">
          <button aria-label="Minimize"><svg width="11" height="11" viewBox="0 0 11 11"><path d="M1 6h10" stroke="#000" /></svg></button>
          <button aria-label="Restore">
            <svg width="11" height="11" viewBox="0 0 11 11" fill="none" stroke="#000"><path d="M.5 3.500h7v7h-7zM3 3V.500h7.500V8H8" strokeWidth="1.200" /></svg>
          </button>
          <button aria-label="Close"><svg width="11" height="11" viewBox="0 0 11 11" stroke="#000"><path d="M.5.500l10 10M10.500.500l-10 10" /></svg></button>
        </div>
      </header>
      <div className="flex h-[22px] shrink-0 items-center justify-end bg-[#bbdafe]">
        <button aria-label="Help" className="-mr-1 grid size-[13px] place-items-center rounded-full border border-[#7ba2d8] bg-[#2b62b8] text-[10px] font-bold leading-none text-white">?</button>
      </div>
      <Ribbon />
      <Workspace />
      <StatusBar />
      <Taskbar />
      <MovieDialog />
      <div className="pointer-events-none absolute left-[523px] top-[5px] whitespace-nowrap font-['DejaVu_Sans'] text-[19px] font-bold leading-5 text-[#f4f4f4] [text-shadow:0_0_2px_#222,0_0_2px_#222,1px_1px_2px_#222,-1px_-1px_2px_#444,1px_-1px_1px_#555]">
        www.BANDICAM.com
      </div>
    </div>
  );
}
